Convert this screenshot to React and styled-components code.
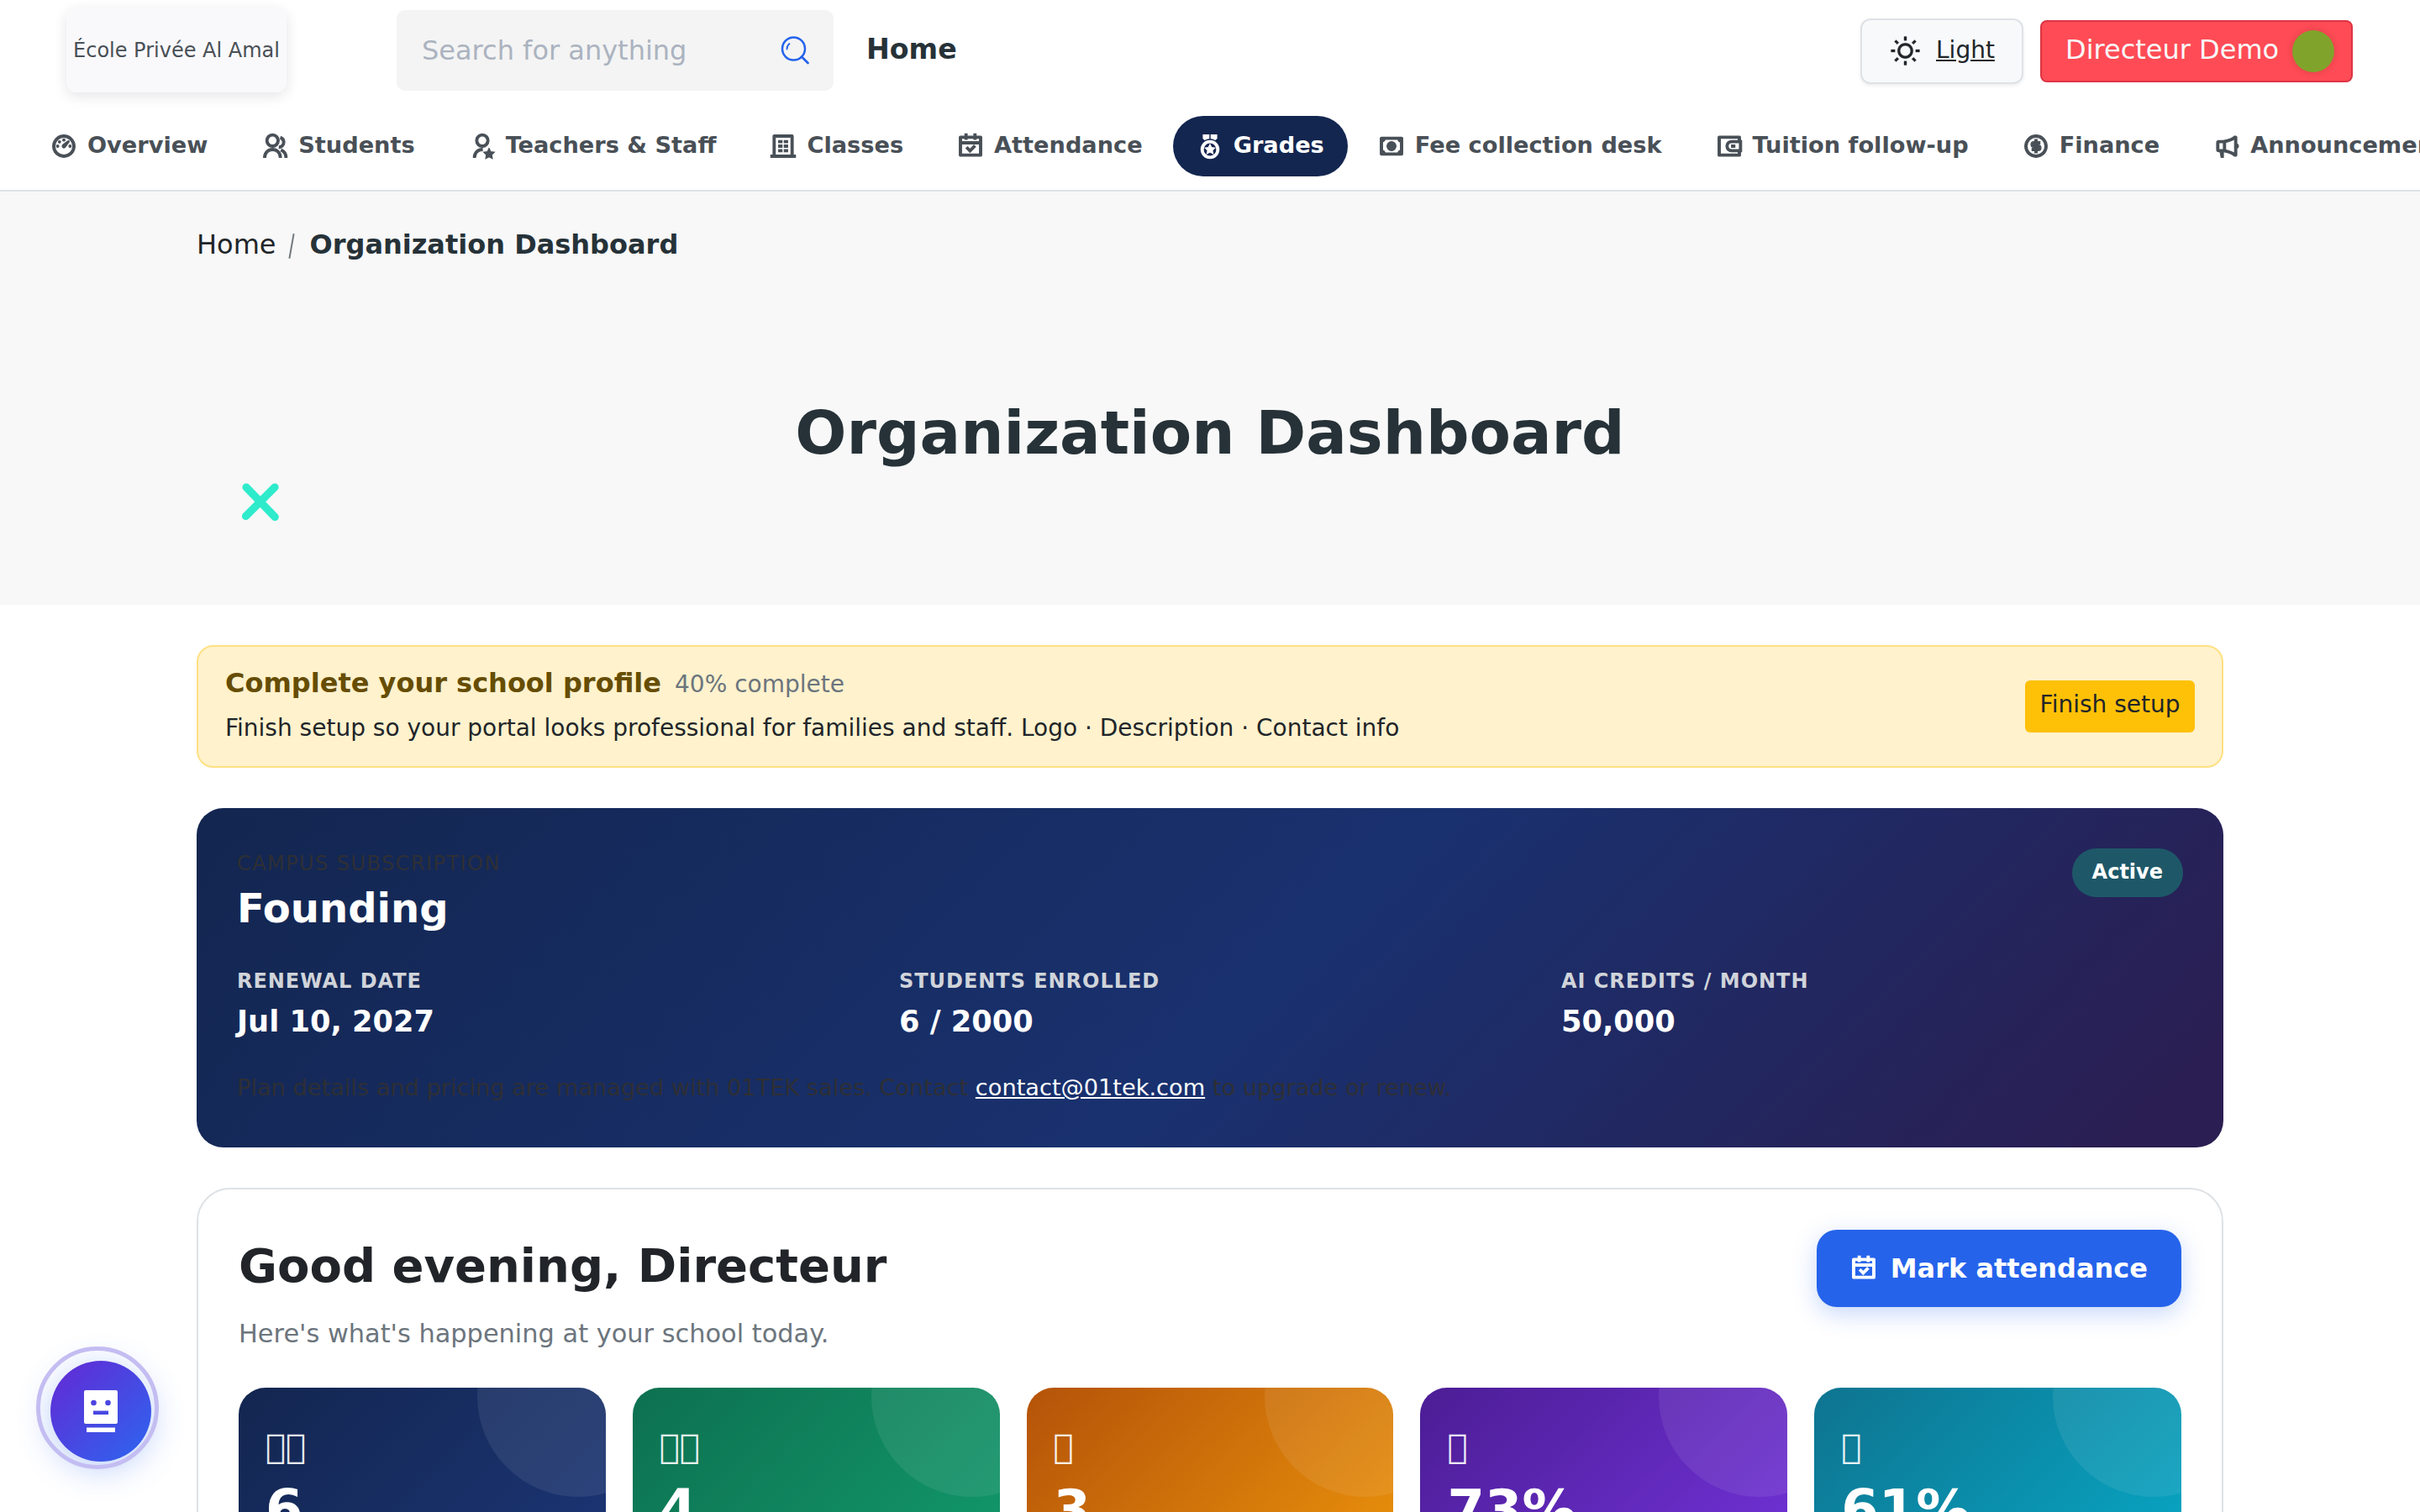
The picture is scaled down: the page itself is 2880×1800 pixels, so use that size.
import React from "react";
import styled, { createGlobalStyle } from "styled-components";
import {
  RiBuilding4Line,
  RiCalendarCheckLine,
  RiCashLine,
  RiDashboard3Line,
  RiGroupLine,
  RiMedalLine,
  RiMegaphoneLine,
  RiMoneyDollarCircleLine,
  RiSunLine,
  RiUserStarLine,
  RiWallet3Line,
} from "react-icons/ri";

const navItems = [
  { label: "Overview", icon: RiDashboard3Line },
  { label: "Students", icon: RiGroupLine },
  { label: "Teachers & Staff", icon: RiUserStarLine },
  { label: "Classes", icon: RiBuilding4Line },
  { label: "Attendance", icon: RiCalendarCheckLine },
  { label: "Grades", icon: RiMedalLine, active: true },
  { label: "Fee collection desk", icon: RiCashLine },
  { label: "Tuition follow-up", icon: RiWallet3Line },
  { label: "Finance", icon: RiMoneyDollarCircleLine },
  { label: "Announcements", icon: RiMegaphoneLine },
];

const planFacts = [
  { label: "Renewal date", value: "Jul 10, 2027" },
  { label: "Students enrolled", value: "6 / 2000" },
  { label: "AI credits / month", value: "50,000" },
];

// private use glyphs, shown as empty boxes
const stats = [
  { icon: "\u{F0001}\u{F0002}", value: "6", from: "#132650", to: "#1d387c" },
  { icon: "\u{F0001}\u{F0003}", value: "4", from: "#0d7050", to: "#13a070" },
  { icon: "\u{F0004}", value: "3", from: "#b45309", to: "#f59e0b" },
  { icon: "\u{F0005}", value: "73%", from: "#4c1d95", to: "#7836e4" },
  { icon: "\u{F0006}", value: "61%", from: "#0e7490", to: "#06b0ce" },
];

const SearchIcon = () => (
  <svg width="36" height="36" viewBox="0 0 36 36" fill="none" stroke="#2563eb" strokeLinecap="round">
    <circle cx="16.5" cy="16" r="13.5" strokeWidth="2.5" />
    <path d="M26 25.5 L33.5 33" strokeWidth="2.8" />
    <path d="M8.5 16.5 A8 8 0 0 1 11.5 10" strokeWidth="1.8" />
  </svg>
);

const CrossShape = () => (
  <svg width="46" height="46" viewBox="0 0 46 46" stroke="#2eebcb" strokeLinecap="round" strokeWidth="9.2">
    <path d="M6 6 L40.200 41.500 M40 6 L5.500 40.500" />
  </svg>
);

const BotIcon = () => (
  <svg width="42" height="50" viewBox="0 0 42 50" fill="#fff">
    <path
      fillRule="evenodd"
      d="M3 0 H39 A2 2 0 0 1 41 2 V38 A2 2 0 0 1 39 40 H3 A2 2 0 0 1 1 38 V2 A2 2 0 0 1 3 0 Z M12.500 11.700 A3.300 3.300 0 1 0 12.500 18.300 A3.300 3.300 0 1 0 12.500 11.700 Z M29.500 11.700 A3.300 3.300 0 1 0 29.500 18.300 A3.300 3.300 0 1 0 29.500 11.700 Z M12 24.500 V29 H30 V24.500 Z"
    />
    <rect x="4" y="44.500" width="34" height="5.500" />
  </svg>
);

const App = () => {
  return (
    <>
      <GlobalStyle />
      <Page>
        <Header>
          <TopBar>
            <Logo>École Privée Al Amal</Logo>
            <SearchBox>
              <span>Search for anything</span>
              <SearchIcon />
            </SearchBox>
            <HomeLink>Home</HomeLink>
            <TopActions>
              <ThemeButton>
                <RiSunLine />
                <span>Light</span>
              </ThemeButton>
              <UserButton>
                <span>Directeur Demo</span>
                <Avatar />
              </UserButton>
            </TopActions>
          </TopBar>
          <Nav>
            {navItems.map(({ label, icon: Icon, active }) => (
              <NavItem key={label} $active={active}>
                <Icon />
                <span>{label}</span>
              </NavItem>
            ))}
          </Nav>
        </Header>

        <Hero>
          <Breadcrumb>
            <span>Home</span>
            <Slash />
            <strong>Organization Dashboard</strong>
          </Breadcrumb>
          <HeroTitle>Organization Dashboard</HeroTitle>
          <CrossWrap>
            <CrossShape />
          </CrossWrap>
        </Hero>

        <Content>
          <SetupAlert>
            <div>
              <AlertHeading>
                <strong>Complete your school profile</strong>
                <span>40% complete</span>
              </AlertHeading>
              <AlertText>
                Finish setup so your portal looks professional for families and staff. Logo ·
                Description · Contact info
              </AlertText>
            </div>
            <SetupButton>Finish setup</SetupButton>
          </SetupAlert>

          <PlanCard>
            <PlanHead>
              <div>
                <PlanLabel>Campus subscription</PlanLabel>
                <PlanName>Founding</PlanName>
              </div>
              <StatusBadge>Active</StatusBadge>
            </PlanHead>
            <PlanGrid>
              {planFacts.map((fact) => (
                <div key={fact.label}>
                  <FactLabel>{fact.label}</FactLabel>
                  <FactValue>{fact.value}</FactValue>
                </div>
              ))}
            </PlanGrid>
            <PlanNote>
              Plan details and pricing are managed with 01TEK sales. Contact{" "}
              <a href="mailto:contact@01tek.com">contact@01tek.com</a> to upgrade or renew.
            </PlanNote>
          </PlanCard>

          <Overview>
            <OverviewHead>
              <div>
                <Greeting>Good evening, Directeur</Greeting>
                <SubGreeting>Here's what's happening at your school today.</SubGreeting>
              </div>
              <MarkButton>
                <RiCalendarCheckLine />
                Mark attendance
              </MarkButton>
            </OverviewHead>
            <StatGrid>
              {stats.map((stat) => (
                <StatCard key={stat.value} $from={stat.from} $to={stat.to}>
                  <StatIcon>{stat.icon}</StatIcon>
                  <StatValue>{stat.value}</StatValue>
                </StatCard>
              ))}
            </StatGrid>
          </Overview>
        </Content>

        <BotButton>
          <BotIcon />
        </BotButton>
      </Page>
    </>
  );
};

const GlobalStyle = createGlobalStyle`
  * {
    box-sizing: border-box;
  }
  body {
    margin: 0;
    background: #fff;
    color: #212529;
    font-family: "DejaVu Sans", sans-serif;
    overflow: hidden;
  }
`;

const Page = styled.div`
  width: 2880px;
  height: 1800px;
  overflow: hidden;
`;

const Header = styled.header`
  height: 228px;
  border-bottom: 2px solid #dee2e6;
  background: #fff;
`;

const TopBar = styled.div`
  display: flex;
  align-items: center;
  height: 120px;
  padding: 0 80px 0 79px;
`;

const Logo = styled.div`
  display: flex;
  align-items: center;
  justify-content: center;
  width: 262px;
  height: 100px;
  border-radius: 12px;
  background: #f9f9fb;
  box-shadow: 0 4px 16px rgba(30, 30, 60, 0.12);
  color: #495057;
  font-size: 24px;
  white-space: nowrap;
`;

const SearchBox = styled.div`
  display: flex;
  align-items: center;
  justify-content: space-between;
  width: 520px;
  height: 96px;
  margin-left: 131px;
  padding: 0 28px 0 30px;
  border-radius: 10px;
  background: #f4f4f4;
  color: #abb3c0;
  font-size: 32px;
`;

const HomeLink = styled.a`
  margin-left: 39px;
  padding-bottom: 3px;
  color: #263238;
  font-size: 33.2px;
  font-weight: 700;
`;

const TopActions = styled.div`
  display: flex;
  align-items: center;
  gap: 20px;
  margin: 2px 0 0 auto;
`;

const ThemeButton = styled.div`
  display: flex;
  align-items: center;
  gap: 18px;
  width: 194px;
  height: 78px;
  padding: 0 0 2px 33px;
  border: 2px solid #dee2e6;
  border-radius: 12px;
  background: #f8f9fa;
  box-shadow: 0 2px 4px rgba(0, 0, 0, 0.07);
  font-size: 28px;

  svg {
    width: 37px;
    height: 37px;
    stroke: currentColor;
    stroke-width: 0.2;
  }
  span {
    padding-bottom: 2px;
    text-decoration: underline;
  }
`;

const UserButton = styled.div`
  display: flex;
  align-items: center;
  justify-content: space-between;
  width: 372px;
  height: 74px;
  padding: 0 20px 0 28px;
  border: 2px solid #dc3545;
  border-radius: 8px;
  background: #ff4b55;
  color: #f8f9fa;
  font-size: 32px;
  white-space: nowrap;

  span:first-child {
    padding-bottom: 4px;
  }
`;

const Avatar = styled.span`
  width: 50px;
  height: 50px;
  border-radius: 50%;
  background: #80a42b;
  box-shadow: 0 0 8px rgba(0, 0, 0, 0.15);
`;

const Nav = styled.nav`
  display: flex;
  gap: 8px;
  padding: 18px 32px 16px;
  overflow: hidden;
`;

const NavItem = styled.a`
  display: flex;
  align-items: center;
  flex-shrink: 0;
  gap: 12px;
  height: 72px;
  padding: 0 28px;
  border-radius: 36px;
  background: ${(props) => (props.$active ? "#132650" : "transparent")};
  color: ${(props) => (props.$active ? "#fff" : "#495057")};
  font-size: 27.2px;
  font-weight: 700;
  white-space: nowrap;

  svg {
    width: 32px;
    height: 32px;
    stroke: currentColor;
    stroke-width: 0.9;
  }
  span {
    padding-bottom: 3px;
  }
`;

const Hero = styled.section`
  height: 492px;
  padding: 44px 234px 0;
  background: #f8f8f8;
`;

const Breadcrumb = styled.div`
  display: flex;
  align-items: center;
  height: 38px;
  color: #263238;
  font-size: 32px;

  span:first-child {
    color: #212529;
  }
`;

const Slash = styled.span`
  width: 2px;
  height: 30px;
  margin: 4px 21px 0 17px;
  background: #737b80;
  transform: rotate(10deg);
`;

const HeroTitle = styled.h1`
  margin: 162px 0 0;
  color: #263238;
  font-size: 72px;
  font-weight: 700;
  line-height: 86px;
  text-align: center;
`;

const CrossWrap = styled.div`
  display: flex;
  margin: 16px 0 0 53px;
`;

const Content = styled.main`
  padding: 48px 234px 0;
`;

const SetupAlert = styled.div`
  display: flex;
  align-items: center;
  justify-content: space-between;
  height: 146px;
  padding: 0 32px;
  border: 2px solid #ffe083;
  border-radius: 20px;
  background: #fff2cd;
`;

const AlertHeading = styled.div`
  display: flex;
  align-items: baseline;
  gap: 16px;
  color: #6c757d;
  font-size: 28px;
  line-height: 48px;

  strong {
    color: #664d03;
    font-size: 32px;
  }
`;

const AlertText = styled.div`
  margin: 7px 0 6px;
  font-size: 28px;
  line-height: 42px;
`;

const SetupButton = styled.div`
  height: 62px;
  padding: 0 17.5px;
  border-radius: 6px;
  background: #ffc107;
  font-size: 28px;
  line-height: 57px;
`;

const PlanCard = styled.section`
  height: 404px;
  margin-top: 48px;
  padding: 48px;
  border-radius: 32px;
  background: linear-gradient(135deg, #132650 0%, #19316f 53%, #2a1e52 96%);
  color: #fff;
`;

const PlanHead = styled.div`
  display: flex;
  align-items: flex-start;
  justify-content: space-between;
`;

const PlanLabel = styled.div`
  color: #2e2f34;
  font-size: 24px;
  letter-spacing: 0.06em;
  line-height: 36px;
  text-transform: uppercase;
`;

const PlanName = styled.div`
  font-size: 48px;
  font-weight: 700;
  line-height: 58px;
  margin-top: 6px;
`;

const StatusBadge = styled.span`
  padding: 0 24px;
  border-radius: 29px;
  background: #1e5868;
  font-size: 24px;
  font-weight: 700;
  line-height: 56px;
  height: 58px;
`;

const PlanGrid = styled.div`
  display: grid;
  grid-template-columns: repeat(3, 1fr);
  gap: 48px;
  margin-top: 40px;
`;

const FactLabel = styled.div`
  color: #d0d4da;
  font-size: 24px;
  font-weight: 700;
  letter-spacing: 0.04em;
  line-height: 36px;
  text-transform: uppercase;
`;

const FactValue = styled.div`
  margin-top: 4px;
  font-size: 35.2px;
  font-weight: 700;
  line-height: 52px;
`;

const PlanNote = styled.div`
  margin-top: 33px;
  color: #2e2f34;
  font-size: 27.2px;
  line-height: 40px;

  a {
    color: #fff;
  }
`;

const Overview = styled.section`
  height: 900px;
  margin-top: 48px;
  padding: 48px;
  border: 2px solid #dee2e6;
  border-radius: 40px;
  background: #fff;
`;

const OverviewHead = styled.div`
  display: flex;
  align-items: flex-start;
  justify-content: space-between;
  height: 188px;
`;

const Greeting = styled.h2`
  margin: 9px 0 0;
  font-size: 56px;
  font-weight: 700;
  line-height: 68px;
`;

const SubGreeting = styled.p`
  margin: 24px 0 0;
  color: #6c757d;
  font-size: 30.4px;
  line-height: 46px;
`;

const MarkButton = styled.div`
  display: flex;
  align-items: center;
  gap: 16px;
  height: 92px;
  padding: 0 40px;
  border-radius: 24px;
  background: #2563eb;
  box-shadow: 0 8px 28px rgba(37, 99, 235, 0.25);
  color: #fff;
  font-size: 32px;
  font-weight: 700;

  svg {
    width: 32px;
    height: 32px;
    stroke: currentColor;
    stroke-width: 0.9;
  }
`;

const StatGrid = styled.div`
  display: grid;
  grid-template-columns: repeat(5, 1fr);
  gap: 32px;
`;

const StatCard = styled.div`
  position: relative;
  height: 340px;
  padding: 40px 32px;
  border-radius: 32px;
  background: linear-gradient(135deg, ${(props) => props.$from}, ${(props) => props.$to});
  color: #fff;
  overflow: hidden;

  /* soft bubble in the corner */
  &::after {
    content: "";
    position: absolute;
    top: -110px;
    right: -87px;
    width: 240px;
    height: 240px;
    border-radius: 50%;
    background: rgba(255, 255, 255, 0.08);
  }
`;

const StatIcon = styled.div`
  font-size: 40px;
  line-height: 60px;
  opacity: 0.9;
`;

const StatValue = styled.div`
  margin-top: 13px;
  font-size: 64px;
  font-weight: 700;
  line-height: 64px;
`;

const BotButton = styled.div`
  position: fixed;
  left: 60px;
  bottom: 60px;
  display: flex;
  align-items: center;
  justify-content: center;
  width: 120px;
  height: 120px;
  border-radius: 50%;
  background: linear-gradient(135deg, #6428d4, #2c66f0);
  box-shadow: 0 8px 40px rgba(37, 99, 235, 0.32);

  &::before {
    content: "";
    position: absolute;
    top: -17px;
    left: -17px;
    box-sizing: border-box;
    width: 146px;
    height: 146px;
    border: 5px solid #c3bdf2;
    border-radius: 50%;
  }
`;

export default App;
